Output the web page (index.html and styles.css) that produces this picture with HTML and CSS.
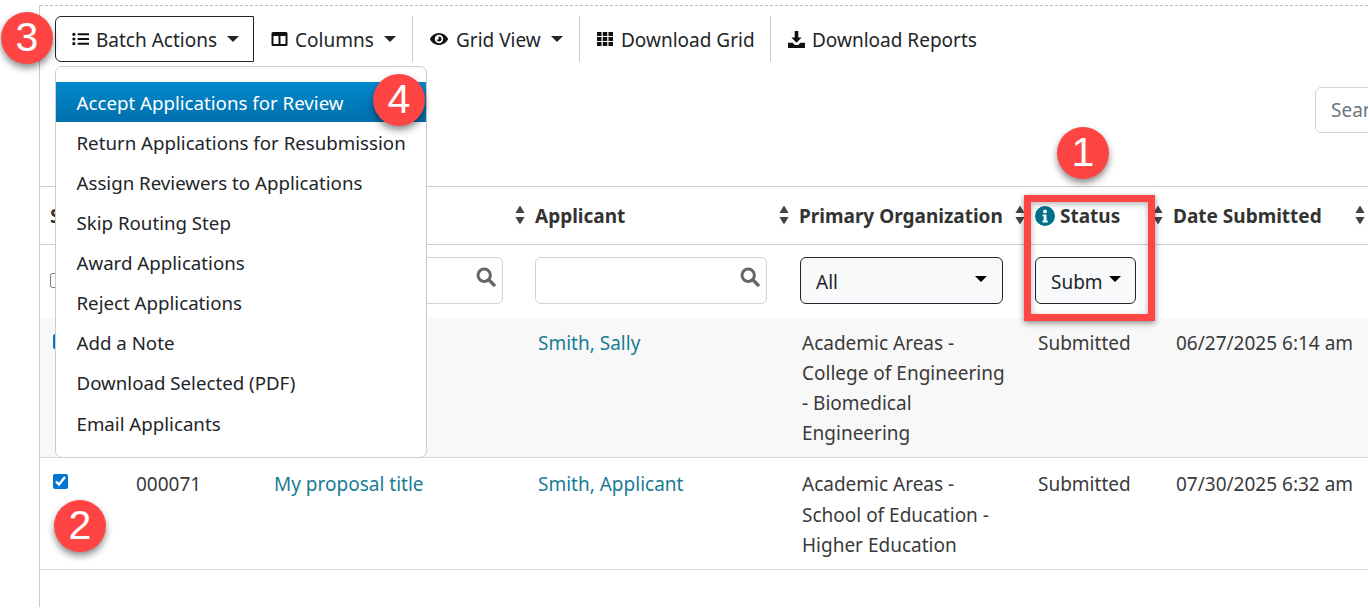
FILE: index.html
```html
<!DOCTYPE html>
<html lang="en">
<head>
<meta charset="utf-8">
<title>Applications</title>
<link rel="stylesheet" href="styles.css">
</head>
<body>
<svg class="defs" width="0" height="0" aria-hidden="true">
  <symbol id="sort" viewBox="0 0 10 20"><path d="M5 0.5 L9.6 8 H0.4 Z M5 19.5 L9.6 12 H0.4 Z"/></symbol>
  <symbol id="search" viewBox="0 0 20 20"><circle cx="8.2" cy="8.2" r="6.2" fill="none" stroke="currentColor" stroke-width="3"/><path d="M12.8 12.8 L18 18" stroke="currentColor" stroke-width="3.4" stroke-linecap="round"/></symbol>
</svg>
<main class="page">
  <div class="toolbar">
    <button class="tool tool-primary">
      <svg class="ico" viewBox="0 0 18 14"><circle cx="2" cy="2" r="1.7"/><circle cx="2" cy="7" r="1.7"/><circle cx="2" cy="12" r="1.7"/><path d="M6 1h12v2H6zM6 6h12v2H6zM6 11h12v2H6z"/></svg>
      <span>Batch Actions</span><i class="caret"></i>
    </button>
    <button class="tool tool-columns">
      <svg class="ico" viewBox="0 0 16 14"><path fill-rule="evenodd" d="M1.5 0h13A1.5 1.5 0 0 1 16 1.500v11a1.500 1.500 0 0 1-1.500 1.500h-13A1.500 1.500 0 0 1 0 12.500v-11A1.500 1.500 0 0 1 1.500 0zM2 4v8h5V4zM9 4v8h5V4z"/></svg>
      <span>Columns</span><i class="caret"></i>
    </button>
    <button class="tool tool-view">
      <svg class="ico ico-eye" viewBox="0 0 18 12"><path fill-rule="evenodd" d="M9 0c3.900 0 7.100 2.300 8.900 5.500a1 1 0 0 1 0 1C16.100 9.700 12.900 12 9 12S1.900 9.700.1 6.500a1 1 0 0 1 0-1C1.900 2.300 5.100 0 9 0zm0 1.800a4.200 4.200 0 1 0 0 8.400 4.200 4.200 0 0 0 0-8.400zm0 1.700a2.500 2.500 0 1 1-2.400 3.200c.8.400 1.900-.1 2.100-1 .1-.6-.1-1.300-.5-1.700.2-.3.500-.5.800-.5z"/></svg>
      <span>Grid View</span><i class="caret"></i>
    </button>
    <button class="tool tool-grid">
      <svg class="ico" viewBox="0 0 16 14"><path d="M0 0h4.500v4H0zM5.750 0h4.500v4h-4.500zM11.500 0H16v4h-4.500zM0 5h4.500v4H0zM5.750 5h4.500v4h-4.500zM11.500 5H16v4h-4.500zM0 10h4.500v4H0zM5.750 10h4.500v4h-4.500zM11.500 10H16v4h-4.500z"/></svg>
      <span>Download Grid</span>
    </button>
    <button class="tool tool-last">
      <svg class="ico ico-dl" viewBox="0 0 16 16"><path d="M6.300 0h3.400v6h3.100L8 11 3.200 6h3.100z"/><path d="M0 11h4.300L6.500 13.200h3L11.700 11H16v5H0z"/></svg>
      <span>Download Reports</span>
    </button>
  </div>

  <div class="search-row">
    <input class="search" type="text" placeholder="Search...">
  </div>

  <table class="grid">
    <colgroup>
      <col class="c-sel"><col class="c-id"><col class="c-title"><col class="c-app"><col class="c-org"><col class="c-status"><col class="c-date">
    </colgroup>
    <thead>
      <tr class="head">
        <th class="th-sel"><div class="th"><span>Select</span></div></th>
        <th><div class="th"><span>ID</span><svg class="sort"><use href="#sort"/></svg></div></th>
        <th><div class="th"><span>Title</span><svg class="sort"><use href="#sort"/></svg></div></th>
        <th><div class="th"><span>Applicant</span><svg class="sort"><use href="#sort"/></svg></div></th>
        <th><div class="th"><span>Primary Organization</span><svg class="sort"><use href="#sort"/></svg></div></th>
        <th>
          <div class="th">
            <span class="status-label">
              <svg class="info" viewBox="0 0 20 20"><circle cx="10" cy="10" r="10"/><circle cx="10" cy="5.400" r="1.900" class="info-i"/><path class="info-i" d="M7.600 8.400h3.900v6.100h1.200v1.900H7.400v-1.900h1.300v-4.200H7.600z"/></svg>
              Status
            </span>
            <svg class="sort"><use href="#sort"/></svg>
          </div>
        </th>
        <th><div class="th"><span>Date Submitted</span><svg class="sort"><use href="#sort"/></svg></div></th>
      </tr>
      <tr class="filters">
        <th><input class="check check-off" type="checkbox"></th>
        <th></th>
        <th><div class="field field-title"><svg class="mag"><use href="#search"/></svg></div></th>
        <th><div class="field field-app"><svg class="mag"><use href="#search"/></svg></div></th>
        <th><div class="pick pick-org"><span>All</span><i class="caret caret-dark"></i></div></th>
        <th><div class="pick pick-status"><span>Subm</span><i class="caret caret-dark"></i></div></th>
        <th></th>
      </tr>
    </thead>
    <tbody>
      <tr class="odd">
        <td><input class="check" type="checkbox" checked></td>
        <td>000070</td>
        <td><a href="#">My proposal title</a></td>
        <td><a href="#">Smith, Sally</a></td>
        <td class="org">Academic Areas - College of Engineering - Biomedical Engineering</td>
        <td>Submitted</td>
        <td>06/27/2025 6:14 am</td>
      </tr>
      <tr class="even">
        <td><input class="check" type="checkbox" checked></td>
        <td>000071</td>
        <td><a href="#">My proposal title</a></td>
        <td><a href="#">Smith, Applicant</a></td>
        <td class="org">Academic Areas - School of Education - Higher Education</td>
        <td>Submitted</td>
        <td>07/30/2025 6:32 am</td>
      </tr>
    </tbody>
  </table>

  <ul class="menu">
    <li class="active">Accept Applications for Review</li>
    <li>Return Applications for Resubmission</li>
    <li>Assign Reviewers to Applications</li>
    <li>Skip Routing Step</li>
    <li>Award Applications</li>
    <li>Reject Applications</li>
    <li>Add a Note</li>
    <li>Download Selected (PDF)</li>
    <li>Email Applicants</li>
  </ul>
</main>

<div class="redbox"></div>
<div class="badge b1">1</div>
<div class="badge b2">2</div>
<div class="badge b3">3</div>
<div class="badge b4">4</div>
</body>
</html>
```
FILE: styles.css
```css
* { box-sizing: border-box; }
html, body { margin: 0; padding: 0; height: 607px; overflow: hidden; background: #fff; }
body { font-family: "Noto Sans", "Open Sans", sans-serif; font-size: 19px; color: #333; position: relative; width: 1368px; }
.defs { position: absolute; }

.page { margin: 5px 0 0 39px; height: 602px; border-left: 1px solid #ccc; position: relative; }
.page::before { content: ""; display: block; border-top: 1px dashed #bbb; }

.toolbar { display: flex; margin: 10px 0 0 15px; height: 46px; }
.tool { display: flex; align-items: center; height: 46px; font: inherit; color: #212529; background: #fff; border: 0; border-right: 1px solid #ccc; padding: 0 0 0 17px; margin: 0; white-space: nowrap; }
.tool span { padding-top: 2px; }
.tool-primary { width: 199px; border: 1px solid #212529; border-radius: 6px 0 0 6px; padding-left: 16px; }
.tool-columns { width: 159px; }
.tool-view { width: 167px; }
.tool-grid { width: 191px; }
.tool-last { border-right: 0; }
.ico { width: 17px; height: 14px; fill: #111; margin-right: 7px; flex: none; }
.ico-eye { height: 12px; width: 18px; margin-right: 8px; }
.ico-dl { height: 17px; }
.tool-grid .ico { width: 16px; margin-right: 8px; }
.caret { width: 0; height: 0; border: 6px solid transparent; border-top: 6.500px solid #212529; border-bottom: 0; margin-left: 10px; flex: none; }
.caret-dark { border-top-color: #000; }

.search-row { display: flex; justify-content: flex-end; margin-top: 25px; height: 46px; overflow: hidden; }
.search { width: 200px; height: 46px; margin-right: -147px; flex: none; border: 1px solid #ced4da; border-radius: 6px; padding: 0 15px; font: inherit; color: #212529; background: #fff; }
.search::placeholder { color: #6c757d; opacity: 1; }

.grid { margin-top: 53px; width: 1328px; table-layout: fixed; border-collapse: collapse; line-height: 30.200px; }
.c-sel { width: 86px; } .c-id { width: 138px; } .c-title { width: 264px; } .c-app { width: 264px; }
.c-org { width: 236px; } .c-status { width: 138px; } .c-date { width: 202px; }
.head th { height: 58px; padding: 0 3px 0 7px; border-top: 1px solid #ccc; border-bottom: 1px solid #ccc; text-align: left; }
.head .th-sel { padding-left: 10px; }
.th { display: flex; align-items: center; justify-content: space-between; font-weight: 700; font-size: 19px; color: #333; }
.th > span { padding-top: 1px; }
.status-label { display: flex; align-items: center; gap: 5px; }
.sort { width: 10px; height: 20px; fill: #444; flex: none; }
.info { width: 20px; height: 20px; fill: #006f8a; flex: none; }
.info-i { fill: #fff; }

.filters th { height: 73px; padding: 0 10px 2px; font-weight: 400; text-align: left; vertical-align: middle; }
.field { position: relative; height: 47px; border: 1px solid #ced4da; border-radius: 6px; background: #fff; }
.field-title { width: 229px; }
.field-app { width: 232px; margin-left: -3px; }
.mag { position: absolute; right: 6px; top: 9px; width: 20px; height: 20px; color: #666; }
.pick { display: flex; align-items: center; justify-content: space-between; height: 47px; background: #f8f9fa; border: 1px solid #212529; border-radius: 6px; color: #212529; padding: 4px 15px 0 15px; }
.pick-org { width: 203px; margin-left: -2px; }
.pick-status { width: 101px; margin-left: -3px; padding-right: 14px; }
.pick-status .caret { margin-left: 0; margin-top: -6px; }
.pick-org .caret { margin-top: -6px; }

tbody td { padding: 10px 10px 9px; vertical-align: top; border-bottom: 1px solid #d9d9d9; color: #3a3a3a; }
tbody .even td { padding-top: 11px; }
tbody a { color: #1a7b96; text-decoration: none; }
tbody .org { padding-right: 20px; }
.odd td { background: #f8f8f8; }
.check { width: 15px; height: 15px; margin: 6px 0 0 3px; accent-color: #0075d4; display: block; }
.even .check { margin-top: 5px; }
.check-off { margin: 0; }

.menu { position: absolute; left: 15px; top: 61px; width: 372px; height: 392px; margin: 0; padding: 14.800px 0 0; list-style: none; background: #fff; border: 1px solid #ccc; border-radius: 7px; color: #212529; font-size: 18.700px; }
.menu li { height: 40.100px; line-height: 42px; padding-left: 20.500px; white-space: nowrap; }
.menu .active { color: #fff; background: linear-gradient(#0289cb, #006fac); }

.redbox { position: absolute; left: 1024px; top: 195px; width: 131px; height: 126px; border: 7px solid #ff4444; box-shadow: 0 2px 6px rgba(0,0,0,.45), inset 0 2px 6px rgba(0,0,0,.3); }
.badge { position: absolute; width: 52px; height: 52px; border-radius: 50%; background: #ff4444; color: #fff; font: 41px/51px "Liberation Sans", Arial, sans-serif; text-align: center; box-shadow: 0 4px 7px rgba(0,0,0,.45); }
.b1 { left: 1057px; top: 127px; }
.b2 { left: 54px; top: 500px; }
.b3 { left: 1px; top: 12px; }
.b4 { left: 373px; top: 74px; }
```
